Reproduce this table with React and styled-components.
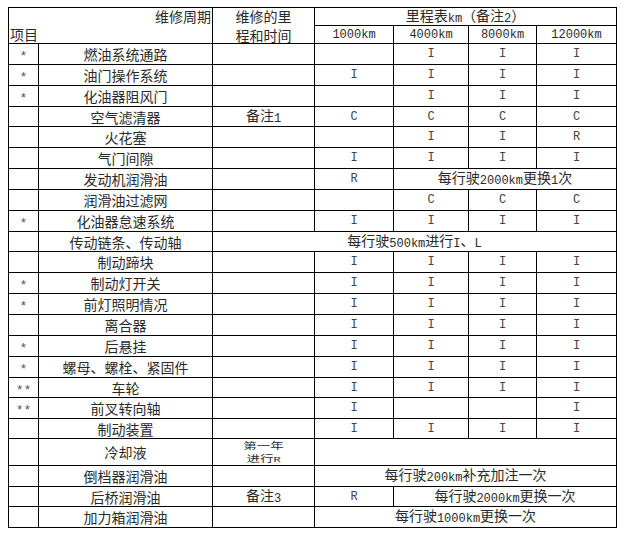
import React from "react";
import styled, { createGlobalStyle } from "styled-components";

const Global = createGlobalStyle`
  html, body { margin: 0; padding: 0; background: #fff; }
  body { font-family: "Noto Sans CJK SC", "Noto Sans", sans-serif; color: #2a2a2a; }
`;

const Page = styled.div`
  padding: 7px 0 0 8px;
`;

const ROW_HEIGHTS = [21, 21, 21, 20, 21, 21, 21, 21, 21, 20, 21, 21, 21, 21, 21, 21, 20, 21, 20, 27, 21, 20, 21];

const Table = styled.div`
  display: grid;
  width: 609px;
  box-sizing: border-box;
  grid-template-columns: 30px 174px 102px 79px 75px 68px 80px;
  grid-template-rows: 18px 18px ${ROW_HEIGHTS.map((h) => `${h}px`).join(" ")};
  border-left: 1px solid #000;
  border-top: 1px solid #000;
`;

const Cell = styled.div`
  box-sizing: content-box;
  border-right: 1px solid #000;
  border-bottom: 1px solid #000;
  grid-column: span ${(p) => p.$span || 1};
  grid-row: span ${(p) => p.$rows || 1};
  display: flex;
  align-items: center;
  justify-content: center;
  font-size: 14px;
  line-height: 16px;
  white-space: nowrap;
  color: ${(p) => (p.$muted ? "#444" : "#2a2a2a")};
`;

const Text = styled.span`
  display: block;
  line-height: 16px;
`;

const CornerCell = styled(Cell)`
  flex-direction: column;
  align-items: stretch;
  justify-content: space-between;
  line-height: 16px;
  padding: 0;
`;

const CornerTop = styled.span`
  text-align: right;
  padding-right: 1px;
`;

const CornerBottom = styled.span`
  text-align: left;
  padding-left: 1px;
  padding-bottom: 1px;
`;

const TwoLine = styled.span`
  text-align: center;
  line-height: 19px;
`;

const Squash = styled.span`
  display: inline-block;
  text-align: center;
  font-size: 9px;
  line-height: 13px;
  transform: scaleX(1.5);
`;

const Mark = styled.span`
  font-family: "Liberation Mono", monospace;
  font-size: 13px;
  color: #555;
  position: relative;
  top: 3px;
`;

const Latin = styled.span`
  font-family: "Liberation Mono", monospace;
  font-size: ${(p) => (p.$small ? "8px" : "12px")};
  vertical-align: ${(p) => (p.$inline ? "-1px" : "baseline")};
`;

const Code = styled.span`
  font-family: "Liberation Mono", monospace;
  font-size: 12px;
  color: #444;
`;

const rich = (text) => (
  <Text>
    {text.split(/([A-Za-z0-9]+)/).map((part, i) =>
      /^[A-Za-z0-9]+$/.test(part) ? (
        <Latin key={i} $inline>
          {part}
        </Latin>
      ) : (
        <React.Fragment key={i}>{part}</React.Fragment>
      )
    )}
  </Text>
);

const I = ["I", "I", "I", "I"];

const rows = [
  { mark: "*", name: "燃油系统通路", km: ["", "I", "I", "I"] },
  { mark: "*", name: "油门操作系统", km: I },
  { mark: "*", name: "化油器阻风门", km: ["", "I", "I", "I"] },
  { name: "空气滤清器", note: "备注1", km: ["C", "C", "C", "C"] },
  { name: "火花塞", km: ["", "I", "I", "R"] },
  { name: "气门间隙", km: I },
  { name: "发动机润滑油", km: ["R", { span: 3, text: "每行驶2000km更换1次" }] },
  { name: "润滑油过滤网", km: ["", "C", "C", "C"] },
  { mark: "*", name: "化油器怠速系统", km: I },
  { name: "传动链条、传动轴", wide: "每行驶500km进行I、L" },
  { name: "制动蹄块", km: I },
  { mark: "*", name: "制动灯开关", km: I },
  { mark: "*", name: "前灯照明情况", km: I },
  { name: "离合器", km: I },
  { mark: "*", name: "后悬挂", km: I },
  { mark: "*", name: "螺母、螺栓、紧固件", km: I },
  { mark: "**", name: "车轮", km: I },
  { mark: "**", name: "前叉转向轴", km: ["I", "", "", "I"] },
  { name: "制动装置", km: I },
  { name: "冷却液", squash: true, km: [{ span: 4, text: "" }] },
  { name: "倒档器润滑油", km: [{ span: 4, text: "每行驶200km补充加注一次" }] },
  { name: "后桥润滑油", note: "备注3", km: ["R", { span: 3, text: "每行驶2000km更换一次" }] },
  { name: "加力箱润滑油", km: [{ span: 4, text: "每行驶1000km更换一次" }] },
];

export default function App() {
  return (
    <Page>
      <Global />
      <Table>
        <CornerCell $span={2} $rows={2}>
          <CornerTop>维修周期</CornerTop>
          <CornerBottom>项目</CornerBottom>
        </CornerCell>
        <Cell $rows={2}>
          <TwoLine>
            维修的里
            <br />
            程和时间
          </TwoLine>
        </Cell>
        <Cell $span={4}>{rich("里程表km（备注2）")}</Cell>
        {["1000km", "4000km", "8000km", "12000km"].map((t) => (
          <Cell key={t}>
            <Latin>{t}</Latin>
          </Cell>
        ))}
        {rows.map((r, ri) => (
          <React.Fragment key={ri}>
            <Cell>
              <Mark>{r.mark || ""}</Mark>
            </Cell>
            <Cell>{r.name}</Cell>
            {r.wide ? (
              <Cell $span={5}>{rich(r.wide)}</Cell>
            ) : (
              <>
                <Cell>
                  {r.squash ? (
                    <Squash>
                      第一年
                      <br />
                      进行<Latin $small>R</Latin>
                    </Squash>
                  ) : r.note ? (
                    rich(r.note)
                  ) : (
                    ""
                  )}
                </Cell>
                {r.km.map((k, ki) =>
                  typeof k === "string" ? (
                    <Cell key={ki} $muted>
                      <Code>{k}</Code>
                    </Cell>
                  ) : (
                    <Cell key={ki} $span={k.span}>
                      {rich(k.text)}
                    </Cell>
                  )
                )}
              </>
            )}
          </React.Fragment>
        ))}
      </Table>
    </Page>
  );
}
